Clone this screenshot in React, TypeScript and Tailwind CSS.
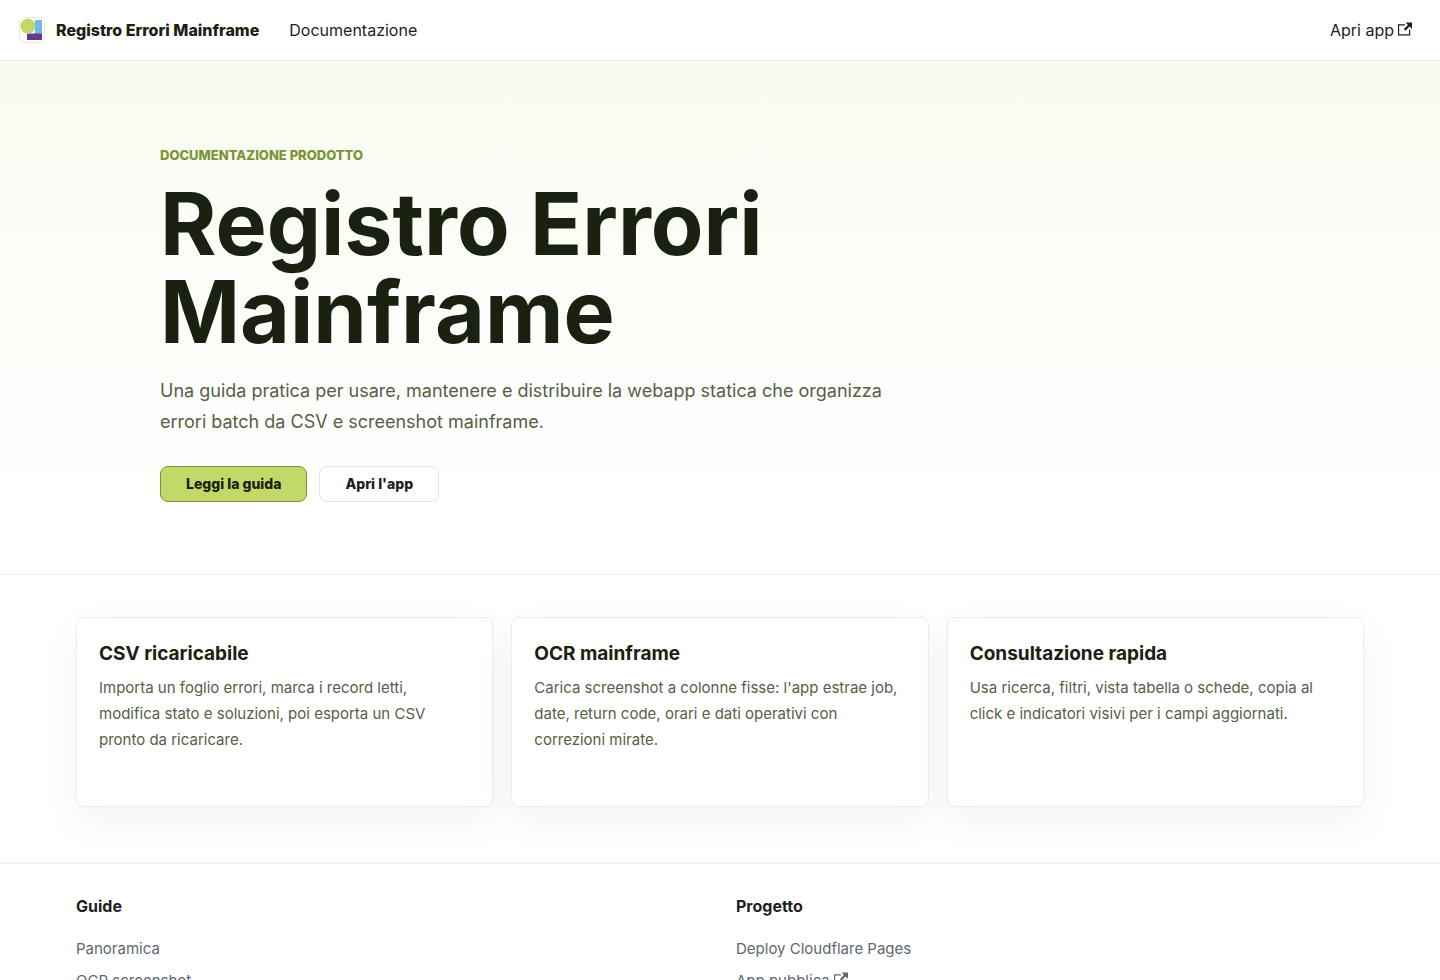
import React from "react";

const features = [
  {
    title: "CSV ricaricabile",
    text: "Importa un foglio errori, marca i record letti, modifica stato e soluzioni, poi esporta un CSV pronto da ricaricare.",
  },
  {
    title: "OCR mainframe",
    text: "Carica screenshot a colonne fisse: l'app estrae job, date, return code, orari e dati operativi con correzioni mirate.",
  },
  {
    title: "Consultazione rapida",
    text: "Usa ricerca, filtri, vista tabella o schede, copia al click e indicatori visivi per i campi aggiornati.",
  },
];

const footerColumns = [
  {
    title: "Guide",
    links: [
      { label: "Panoramica", external: false },
      { label: "OCR screenshot", external: false },
    ],
  },
  {
    title: "Progetto",
    links: [
      { label: "Deploy Cloudflare Pages", external: false },
      { label: "App pubblica", external: true },
    ],
  },
];

function ExternalIcon() {
  return (
    <svg viewBox="0 0 24 24" aria-hidden="true" className="ml-1 inline-block h-[14px] w-[14px] align-baseline">
      <path
        fill="currentColor"
        d="M21 13v10h-21v-19h12v2h-10v15h17v-8h2zm3-12h-10.988l4.035 4-6.977 7.07 2.828 2.828 6.977-7.07 4.125 4.172v-11z"
      />
    </svg>
  );
}

function Logo() {
  return (
    <svg viewBox="0 0 26 26" aria-hidden="true" className="h-[26px] w-[26px]">
      <rect x="0.5" y="0.5" width="25" height="25" rx="4.5" fill="#fff" stroke="#e6ebd8" />
      <rect x="16" y="3" width="7" height="14" fill="#72b8e4" />
      <rect x="8" y="16.500" width="15" height="6.500" fill="#643c8c" />
      <circle cx="9" cy="9" r="7.500" fill="#c2d96a" />
    </svg>
  );
}

export default function App() {
  return (
    <div className="min-h-screen bg-white font-['Inter',sans-serif] text-base text-[#1c1e21]">
      <header className="flex h-[61px] items-center justify-between border-b border-[#e8eae4] pr-7 pl-[19px]">
        <nav className="flex items-center" aria-label="Principale">
          <a href="#" className="flex items-center gap-[11px] font-extrabold text-[#1a2110]">
            <Logo />
            Registro Errori Mainframe
          </a>
          <a href="#guide" className="ml-[30px]">
            Documentazione
          </a>
        </nav>
        <a href="#app">
          Apri app
          <ExternalIcon />
        </a>
      </header>

      <main>
        <section className="border-b border-[#ebebeb] bg-linear-to-b from-[#f9fbf1] to-white to-90% pt-[83px] pb-[72px]">
          <div className="mx-auto max-w-[1120px]">
            <p className="text-[13px] leading-[22px] font-extrabold text-[#7a9436] uppercase">
              Documentazione prodotto
            </p>
            <h1 className="mt-[14px] max-w-[760px] text-[86px] leading-[88px] font-bold text-[#1a2110]">
              Registro Errori Mainframe
            </h1>
            <p className="mt-[19px] max-w-[760px] text-lg leading-[31px] text-[#566046]">
              Una guida pratica per usare, mantenere e distribuire la webapp statica che organizza errori batch da CSV e
              screenshot mainframe.
            </p>
            <div className="mt-[29px] flex gap-3 text-sm font-extrabold">
              <a
                href="#guide"
                className="flex h-9 items-center rounded-lg border border-[#7a9436] bg-[#c2d96a] px-[25px] text-[#1a2110]"
              >
                Leggi la guida
              </a>
              <a href="#app" className="flex h-9 items-center rounded-lg border border-[#e4e4e4] bg-white px-[25px]">
                Apri l'app
              </a>
            </div>
          </div>
        </section>

        <section className="mx-auto grid max-w-[1320px] grid-cols-3 gap-[18px] px-4 pt-[42px] pb-[55px]">
          {features.map((feature) => (
            <article
              key={feature.title}
              className="min-h-[190px] rounded-lg border border-[#ededed] bg-white px-[22px] pt-[23px] pb-6 shadow-[0_14px_40px_rgba(0,0,0,0.05)]"
            >
              <h2 className="text-[19px] leading-[26px] font-bold text-[#1a2110]">{feature.title}</h2>
              <p className="mt-2 text-[15px] leading-[26px] text-[#566046]">{feature.text}</p>
            </article>
          ))}
        </section>
      </main>

      <footer className="border-t-2 border-[#f2f2f2] pt-8 pb-8">
        <div className="mx-auto grid max-w-[1320px] grid-cols-2 gap-8 px-4">
          {footerColumns.map((column) => (
            <div key={column.title}>
              <h3 className="leading-5 font-bold">{column.title}</h3>
              <ul className="mt-[17px] text-[15px] leading-8 text-[#606770]">
                {column.links.map((link) => (
                  <li key={link.label}>
                    <a href="#guide">
                      {link.label}
                      {link.external && <ExternalIcon />}
                    </a>
                  </li>
                ))}
              </ul>
            </div>
          ))}
        </div>
      </footer>
    </div>
  );
}
